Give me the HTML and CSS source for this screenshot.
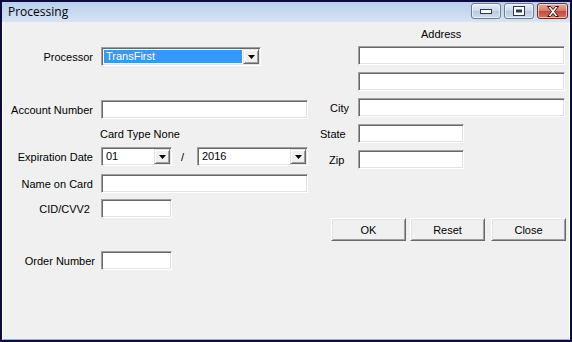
FILE: index.html
```html
<!DOCTYPE html>
<html lang="en">
<head>
    <meta charset="UTF-8">
    <title>Processing</title>
    <link rel="stylesheet" href="styles.css">
</head>
<body>
    <div class="window">
        <div class="titlebar">
            <span class="title">Processing</span>
            <div class="caption-buttons">
                <div class="cap-btn">
                    <svg width="12" height="6" viewBox="0 0 12 6"><rect x="0.5" y="1.5" width="11" height="4" fill="#fff" stroke="#2d3a52"/></svg>
                </div>
                <div class="cap-btn">
                    <svg width="12" height="10" viewBox="0 0 12 10"><rect x="0.5" y="0.5" width="11" height="9" fill="#fff" stroke="#2d3a52"/><rect x="3" y="3.5" width="6" height="3" fill="#2d3a52"/></svg>
                </div>
                <div class="cap-btn close">
                    <svg width="16" height="11" viewBox="0 0 16 11"><path d="M2.5 0.5h3l2.5 3 2.5-3h3l-4 5 4 5h-3l-2.5-3-2.5 3h-3l4-5z" fill="#fff" stroke="#3a1010" stroke-width="1"/></svg>
                </div>
            </div>
        </div>

        <div class="client">
            <div class="col-left">
                <div class="row row-processor">
                    <label>Processor</label>
                    <div class="combo w-wide">
                        <span class="combo-value selected">TransFirst</span>
                        <span class="drop"><svg width="7" height="4" viewBox="0 0 7 4"><polygon points="0,0 7,0 3.5,4" fill="#000"/></svg></span>
                    </div>
                </div>
                <div class="row row-account">
                    <label>Account Number</label>
                    <div class="field w-long"></div>
                </div>
                <div class="row row-cardtype">
                    <span></span>
                    <span class="note">Card Type None</span>
                </div>
                <div class="row row-exp">
                    <label>Expiration Date</label>
                    <div class="exp">
                        <div class="combo w-short">
                            <span class="combo-value">01</span>
                            <span class="drop"><svg width="7" height="4" viewBox="0 0 7 4"><polygon points="0,0 7,0 3.5,4" fill="#000"/></svg></span>
                        </div>
                        <span class="slash">/</span>
                        <div class="combo w-year">
                            <span class="combo-value">2016</span>
                            <span class="drop"><svg width="7" height="4" viewBox="0 0 7 4"><polygon points="0,0 7,0 3.5,4" fill="#000"/></svg></span>
                        </div>
                    </div>
                </div>
                <div class="row row-name">
                    <label>Name on Card</label>
                    <div class="field w-long"></div>
                </div>
                <div class="row row-cid">
                    <label class="lbl-cid">CID/CVV2</label>
                    <div class="field w-short"></div>
                </div>
                <div class="row row-order">
                    <label class="lbl-order">Order Number</label>
                    <div class="field w-short"></div>
                </div>
            </div>

            <div class="col-right">
                <div class="address-caption">Address</div>
                <div class="rrow rrow-first">
                    <span></span>
                    <div class="field w-long"></div>
                </div>
                <div class="rrow">
                    <span></span>
                    <div class="field w-long"></div>
                </div>
                <div class="rrow">
                    <label class="lbl-city">City</label>
                    <div class="field w-long"></div>
                </div>
                <div class="rrow">
                    <label class="lbl-state">State</label>
                    <div class="field w-mid"></div>
                </div>
                <div class="rrow">
                    <label class="lbl-zip">Zip</label>
                    <div class="field w-mid"></div>
                </div>
                <div class="actions">
                    <button class="btn">OK</button>
                    <button class="btn">Reset</button>
                    <button class="btn btn-close">Close</button>
                </div>
            </div>
        </div>
    </div>
</body>
</html>
```

FILE: styles.css
```css
html, body {
    margin: 0;
    padding: 0;
}

body {
    font-family: "Liberation Sans", Arial, sans-serif;
    font-size: 11px;
    color: #000;
    background: #f0f0f0;
}

.window {
    width: 572px;
    height: 342px;
    box-sizing: border-box;
    border: 2px solid #0b0b3e;
    display: flex;
    flex-direction: column;
}

/* title bar */
.titlebar {
    height: 20px;
    display: flex;
    align-items: flex-start;
    justify-content: space-between;
    background: linear-gradient(#b9cfea, #d6e4f4);
    padding-left: 6px;
}

.title {
    font-family: "Open Sans", "Liberation Sans", sans-serif;
    font-size: 12px;
    line-height: 20px;
    margin-top: 0;
}

.caption-buttons {
    display: flex;
    gap: 3px;
    margin-top: 1px;
    margin-right: 2px;
}

.cap-btn {
    width: 30px;
    height: 16px;
    box-sizing: border-box;
    border: 1px solid #6c7b95;
    border-radius: 3px;
    background: linear-gradient(#e6eef8 0%, #cbd9ec 50%, #b7c9e1 51%, #cfdcee 100%);
    display: flex;
    align-items: center;
    justify-content: center;
    box-shadow: inset 0 0 0 1px rgba(255, 255, 255, 0.6);
}

.cap-btn.close {
    width: 31px;
    border-color: #6e2c25;
    background: linear-gradient(#e9a899 0%, #d77a68 50%, #c4483a 51%, #d6735f 100%);
}

/* client area */
.client {
    flex: 1;
    display: flex;
    background: #f0f0f0;
    border-left: 1px solid #fff;
    border-right: 1px solid #fff;
    border-bottom: 1px solid #6ec1e6;
}

.col-left {
    width: 315px;
    display: flex;
    flex-direction: column;
}

.row {
    display: grid;
    grid-template-columns: 90px auto;
    column-gap: 8px;
    align-items: center;
    height: 19px;
}

.row label {
    text-align: right;
}

.row-processor { margin-top: 25px; }
.row-account { margin-top: 34px; }
.row-cardtype { margin-top: 5px; }
.row-exp { margin-top: 4px; }
.row-name { margin-top: 8px; }
.row-cid { margin-top: 6px; }
.row-order { margin-top: 33px; }

.lbl-cid { padding-right: 3px; }
.lbl-order { margin-right: -2px; }

.note {
    margin-left: -1px;
}

/* sunken controls */
.field,
.combo {
    height: 19px;
    box-sizing: border-box;
    background: #fff;
    border: 1px solid;
    border-color: #a0a0a0 #fff #fff #a0a0a0;
    box-shadow: inset 1px 1px 0 #696969, inset -1px -1px 0 #e3e3e3;
}

.w-long { width: 207px; }
.w-wide { width: 160px; }
.w-short { width: 71px; }
.w-year { width: 111px; }
.w-mid { width: 106px; }

.combo {
    display: flex;
    padding: 1px;
}

.combo-value {
    flex: 1;
    padding-left: 2px;
    line-height: 15px;
    margin-left: 1px;
}

.combo-value.selected {
    background: #3399ff;
    color: #fff;
    margin: 1px 1px 1px 1px;
    line-height: 13px;
}

.drop {
    width: 16px;
    box-sizing: border-box;
    background: #f0f0f0;
    border: 1px solid;
    border-color: #e3e3e3 #696969 #696969 #e3e3e3;
    box-shadow: inset 1px 1px 0 #fff, inset -1px -1px 0 #a0a0a0;
    display: flex;
    align-items: center;
    justify-content: center;
}

.exp {
    display: flex;
    align-items: center;
}

.slash {
    width: 25px;
    text-align: center;
    margin-left: -2px;
    margin-right: 2px;
}

/* right column */
.col-right {
    flex: 1;
    display: flex;
    flex-direction: column;
}

.address-caption {
    margin-top: 6px;
    margin-left: 103px;
    height: 13px;
    line-height: 13px;
}

.rrow {
    display: grid;
    grid-template-columns: 32px auto;
    column-gap: 8px;
    align-items: center;
    height: 19px;
    margin-top: 7px;
}

.rrow-first { margin-top: 5px; }

.lbl-city { padding-left: 12px; }
.lbl-state { padding-left: 2px; }
.lbl-zip { padding-left: 11px; }

.actions {
    display: flex;
    margin-top: 49px;
    padding-left: 13px;
    gap: 4px;
}

.btn {
    width: 75px;
    height: 23px;
    box-sizing: border-box;
    font-family: "Liberation Sans", Arial, sans-serif;
    font-size: 11px;
    color: #000;
    background: #f0f0f0;
    border: 1px solid;
    border-color: #fff #696969 #696969 #fff;
    box-shadow: inset 1px 1px 0 #e3e3e3, inset -1px -1px 0 #a0a0a0;
    padding: 0;
}

.btn-close {
    margin-left: 2px;
}
```
